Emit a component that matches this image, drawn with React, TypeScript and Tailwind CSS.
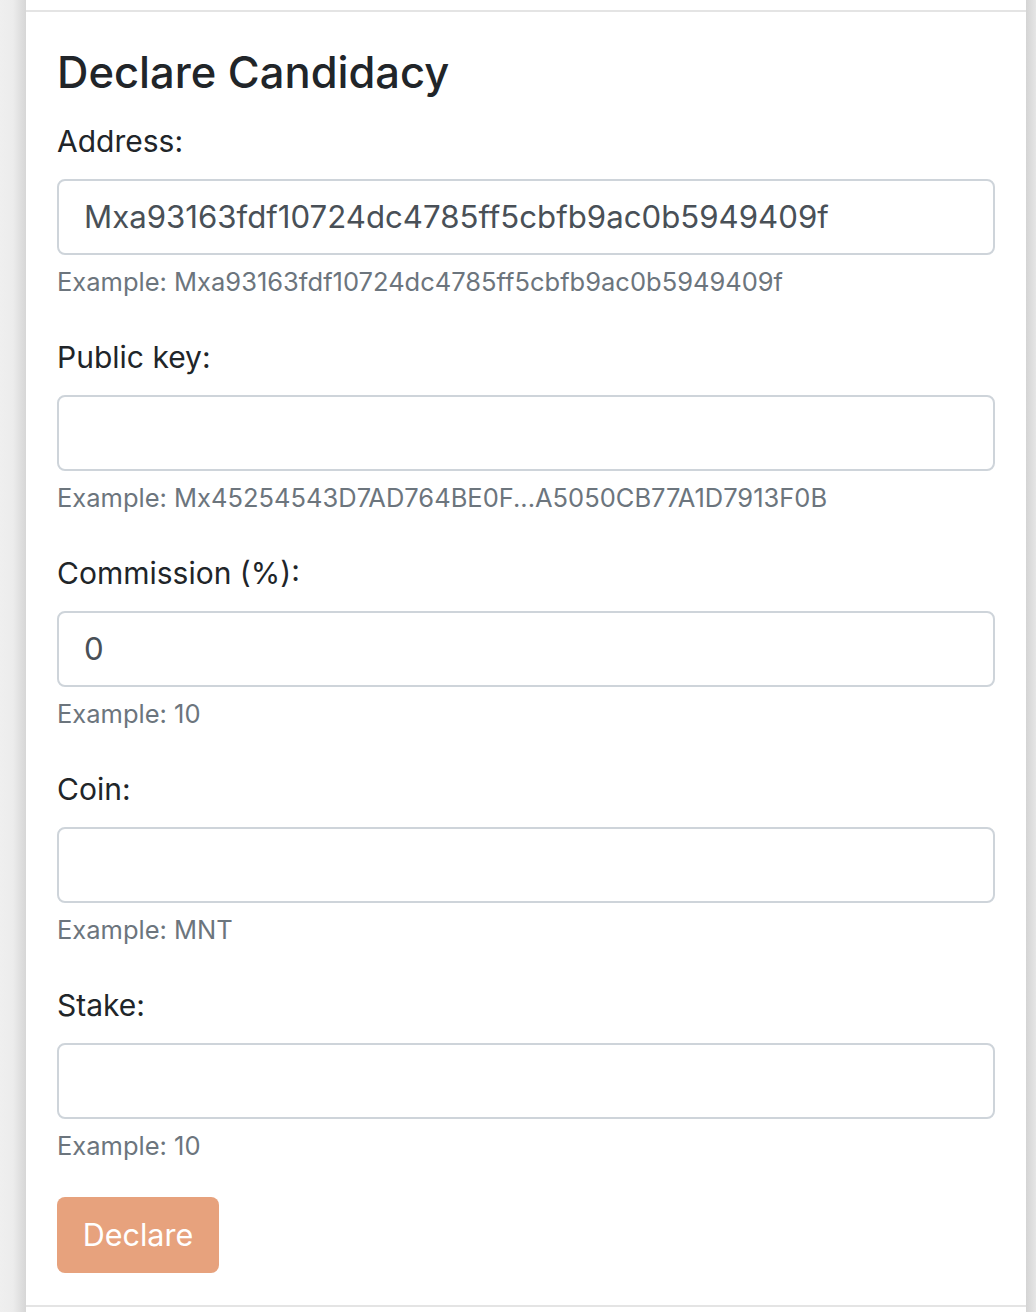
import React from "react";

const font = { fontFamily: 'Inter, "Liberation Sans", Arial, sans-serif' };

function Field({ label, value, hint }: { label: string; value: string; hint: string }) {
  return (
    <div className="flex flex-col">
      <label className="h-[48px] flex items-center text-[30px] text-[#212529] leading-[48px]">{label}</label>
      <div className="mt-[14px] h-[76px] rounded-[8px] border-2 border-[#ced4da] bg-white flex items-center pl-[25px] text-[31.2px] text-[#495057]">
        {value}
      </div>
      <div className="mt-[8px] h-[38px] flex items-center text-[25.5px] text-[#6c757d]">{hint}</div>
    </div>
  );
}

export default function App() {
  return (
    <div className="w-[1036px] h-[1312px] flex bg-white overflow-hidden" style={font}>
      <div className="w-[26px] h-full bg-gradient-to-r from-[#efefef] via-[#ececec] to-[#d6d6d6]" />
      <div className="flex-1 flex flex-col">
        <div className="h-[10px] border-b-2 border-[#e4e4e4] box-content" />
        <div className="flex-1 flex flex-col px-[31px] pt-[33px]">
          <h4 className="h-[56px] flex items-center text-[43.5px] font-medium text-[#212529]">Declare Candidacy</h4>
          <div className="mt-[16px] flex flex-col gap-[32px]">
            <Field
              label="Address:"
              value="Mxa93163fdf10724dc4785ff5cbfb9ac0b5949409f"
              hint="Example: Mxa93163fdf10724dc4785ff5cbfb9ac0b5949409f"
            />
            <Field label="Public key:" value="" hint="Example: Mx45254543D7AD764BE0F...A5050CB77A1D7913F0B" />
            <Field label="Commission (%):" value="0" hint="Example: 10" />
            <Field label="Coin:" value="" hint="Example: MNT" />
            <Field label="Stake:" value="" hint="Example: 10" />
          </div>
          <button className="mt-[32px] w-[162px] h-[76px] rounded-[8px] bg-[#e7a27d] text-white text-[30.5px] flex items-center justify-center">
            Declare
          </button>
        </div>
        <div className="h-[7px] border-t-2 border-[#e4e4e4]" />
      </div>
      <div className="w-[10px] h-full bg-gradient-to-r from-[#d4d4d4] to-[#e6e6e6]" />
    </div>
  );
}
